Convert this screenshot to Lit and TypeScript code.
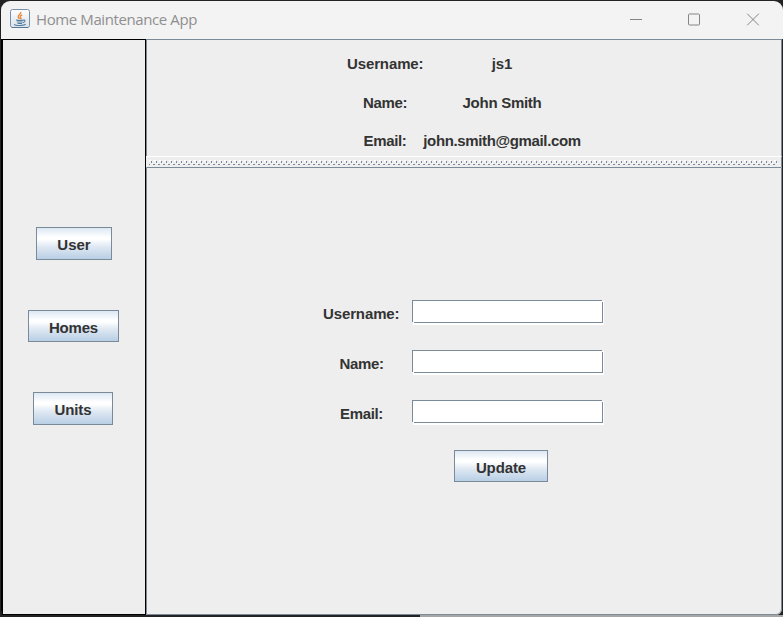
import { LitElement, html, css, svg } from "lit";
import { customElement, property } from "lit/decorators.js";

@customElement("metal-button")
class MetalButton extends LitElement {
  @property() label = "";
  static styles = css`
    :host { display: flex; box-sizing: border-box; }
    button {
      flex: 1; margin: 0; padding: 2px 0 0; border: 1px solid #7a8a99; border-radius: 0;
      font: bold 15px "Liberation Sans", Arial, sans-serif; color: #333; letter-spacing: inherit;
      background: linear-gradient(#dde8f3 0%, #ffffff 30%, #ffffff 36%, #dfe8f2 60%, #b8cfe5 100%);
    }
  `;
  render() { return html`<button>${this.label}</button>`; }
}

@customElement("metal-field")
class MetalField extends LitElement {
  static styles = css`
    :host {
      display: grid; width: 192px; height: 25px;
      background:
        linear-gradient(#7a8a99, #7a8a99) 0 0 / 190px 1px no-repeat,
        linear-gradient(#7a8a99, #7a8a99) 0 0 / 1px 22px no-repeat,
        linear-gradient(#7a8a99, #7a8a99) 190px 2px / 1px 21px no-repeat,
        linear-gradient(#7a8a99, #7a8a99) 2px 22px / 189px 1px no-repeat,
        linear-gradient(#fff, #fff) 1px 1px / 191px 24px no-repeat;
    }
    input {
      min-width: 0; margin: 2px 4px 4px; padding: 0; border: 0; outline: 0; background: none;
      font: 15px "Liberation Sans", Arial, sans-serif; color: #333;
    }
  `;
  render() { return html`<input type="text" />`; }
}

@customElement("title-bar")
class TitleBar extends LitElement {
  @property() caption = "";
  static styles = css`
    :host {
      display: flex; align-items: center; box-sizing: border-box; height: 38px;
      padding: 0 23px 2px 9px; background: #f3f3f3; border-radius: 9px 9px 0 0;
    }
    .logo { width: 20px; height: 20px; flex: none; }
    .caption {
      flex: 1; margin-left: 6px; white-space: nowrap; color: #8f8f8f;
      font: 15px/20px "Open Sans", "Noto Sans", sans-serif; letter-spacing: -0.4px;
    }
    .controls { display: flex; gap: 45px; }
    .controls svg { width: 14px; height: 14px; fill: none; stroke: #858585; }
  `;
  render() {
    const icons = [
      svg`<path d="M2 7.5H14" />`,
      svg`<rect x="1.5" y="2" width="11" height="11" rx="1" />`,
      svg`<path d="M1.2 1.7L12.8 13.3M12.8 1.7L1.2 13.3" />`,
    ];
    return html`
      <svg class="logo" viewBox="0 0 20 20">
        <defs><linearGradient id="tile" x2="0" y2="1">
          <stop offset="0" stop-color="#fff" /><stop offset="1" stop-color="#d9e1e8" />
        </linearGradient></defs>
        <rect x=".5" y=".5" width="19" height="18" rx="2" fill="url(#tile)" stroke="#7691aa" />
        <path d="M2 18.5H18" stroke="#577894" />
        <path d="M10.7 3C11.7 5 7.3 6 8.3 8.2Q8.7 9.2 9.7 10M12.2 5.8Q9.2 7.2 10.7 8.7Q11.4 9.4 10.4 10.3"
          fill="none" stroke="#e9893c" stroke-width="1.4" />
        <path d="M6 11Q10 12 12.9 11M6.8 13H12.6M7.6 14.5H12M13 11.2Q15.7 10.7 14.7 12.5Q14 13.5 12.8 13.8M4.2 15.2Q5 16.5 10 16.5Q14.5 16.5 15.6 15.2"
          fill="none" stroke="#507c9f" stroke-width="1.1" />
      </svg>
      <span class="caption">${this.caption}</span>
      <div class="controls">${icons.map((i) => html`<svg viewBox="0 0 14 14">${i}</svg>`)}</div>
    `;
  }
}

@customElement("app-root")
class AppRoot extends LitElement {
  static styles = css`
    :host {
      display: flex; flex-direction: column; box-sizing: border-box; width: 783px; height: 617px;
      padding: 1px 1px 0; overflow: hidden; background: #242224;
      font: bold 15px/18px "Liberation Sans", Arial, sans-serif; color: #333;
    }
    title-bar { width: 782px; flex: none; }
    .content {
      display: grid; grid-template-columns: 144px 636px; height: 576px; flex: none;
      padding-left: 1px; background: #000; border-radius: 0 0 6px 6px;
    }
    .nav {
      display: flex; flex-direction: column; align-items: flex-start; box-sizing: border-box;
      border: 1px solid #000; background: #eee; padding-top: 187px;
    }
    .user { width: 76px; height: 33px; margin-left: 33px; }
    .homes { width: 91px; height: 32px; margin: 50px 0 50px 25px; letter-spacing: -0.2px; }
    .units { width: 80px; height: 33px; margin-left: 30px; letter-spacing: -0.1px; }
    .split { display: grid; grid-template-rows: 117px 11px 448px; background: #eee; border-radius: 0 0 6px 0; }
    .info {
      box-sizing: border-box; border: solid #7a8a99; border-width: 1px 1px 0;
      display: grid; grid-template-columns: 76px 158px; grid-template-rows: 39px 38px 38px;
      justify-content: start; padding: 4px 0 0 200px;
    }
    .info span { text-align: center; line-height: 39px; white-space: nowrap; }
    .username { letter-spacing: -0.12px; }
    .name, .email { letter-spacing: -0.36px; }
    .value.name { letter-spacing: -0.28px; }
    .divider { border-top: 1px solid #fff; border-right: 1px solid #7a8a99; padding: 3px 3px 0; }
    .divider svg { display: block; width: 629px; height: 6px; }
    .form {
      box-sizing: border-box; border: 1px solid #7a8a99; border-radius: 0 0 6px 0;
      display: grid; grid-template-columns: 76px 192px; grid-template-rows: 50px 50px 50px 32px;
      column-gap: 13px; padding: 132px 0 0 176px;
    }
    .form label { text-align: center; padding-top: 5px; }
    .form .name, .form .email { padding-left: 1px; }
    .update { grid-column: 2; width: 94px; height: 32px; margin-left: 42px; letter-spacing: -0.1px; }
    .beneath { height: 2px; width: 363px; margin-left: 419px; background: #a5a7a4; }
  `;
  render() {
    const details = [
      ["username", "Username:", "js1"],
      ["name", "Name:", "John Smith"],
      ["email", "Email:", "john.smith@gmail.com"],
    ];
    return html`
      <title-bar caption="Home Maintenance App"></title-bar>
      <div class="content">
        <nav class="nav">
          <metal-button class="user" label="User"></metal-button>
          <metal-button class="homes" label="Homes"></metal-button>
          <metal-button class="units" label="Units"></metal-button>
        </nav>
        <main class="split">
          <section class="info">
            ${details.map(([id, k, v]) => html`<span class=${id}>${k}</span><span class="value ${id}">${v}</span>`)}
          </section>
          <div class="divider">
            <svg shape-rendering="crispEdges">
              <defs><pattern id="bumps" width="5" height="6" patternUnits="userSpaceOnUse">
                <path fill="#fff" d="M0 0H2V1H1V2H0zM3 3H4V4H3z" />
                <path fill="#7a8a99" d="M2 1H3V3H2zM4 4H5V5H4zM0 4H1V5H0z" />
              </pattern></defs>
              <rect width="629" height="6" fill="url(#bumps)" />
            </svg>
          </div>
          <section class="form">
            ${details.map(([id, k]) => html`<label class=${id}>${k}</label><metal-field></metal-field>`)}
            <metal-button class="update" label="Update"></metal-button>
          </section>
        </main>
      </div>
      <div class="beneath"></div>
    `;
  }
}
